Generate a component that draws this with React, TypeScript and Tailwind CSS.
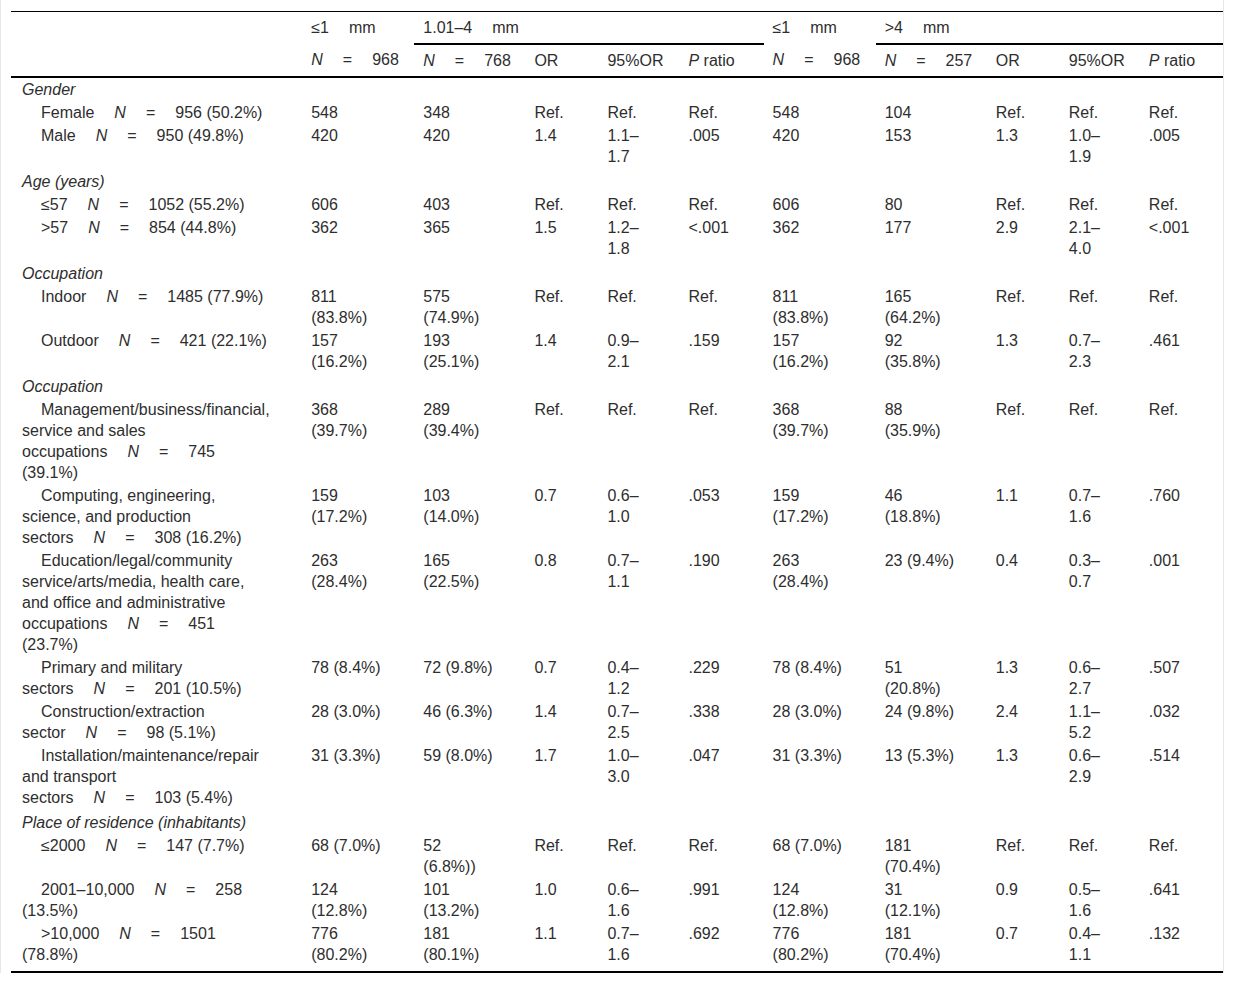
const font = { fontFamily: '"Liberation Sans", Arial, Helvetica, sans-serif' };

type Row =
  | { section: string }
  | { label: [string, string, string, string]; v: string[] };

const rows: Row[] = [
  { section: 'Gender' },
  { label: ['', 'Female', '956', '(50.2%)'], v: ['548', '348', 'Ref.', 'Ref.', 'Ref.', '548', '104', 'Ref.', 'Ref.', 'Ref.'] },
  { label: ['', 'Male', '950', '(49.8%)'], v: ['420', '420', '1.4', '1.1–1.7', '.005', '420', '153', '1.3', '1.0–1.9', '.005'] },
  { section: 'Age (years)' },
  { label: ['', '≤57', '1052', '(55.2%)'], v: ['606', '403', 'Ref.', 'Ref.', 'Ref.', '606', '80', 'Ref.', 'Ref.', 'Ref.'] },
  { label: ['', '>57', '854', '(44.8%)'], v: ['362', '365', '1.5', '1.2–1.8', '<.001', '362', '177', '2.9', '2.1–4.0', '<.001'] },
  { section: 'Occupation' },
  { label: ['', 'Indoor', '1485', '(77.9%)'], v: ['811 (83.8%)', '575 (74.9%)', 'Ref.', 'Ref.', 'Ref.', '811 (83.8%)', '165 (64.2%)', 'Ref.', 'Ref.', 'Ref.'] },
  { label: ['', 'Outdoor', '421', '(22.1%)'], v: ['157 (16.2%)', '193 (25.1%)', '1.4', '0.9–2.1', '.159', '157 (16.2%)', '92 (35.8%)', '1.3', '0.7–2.3', '.461'] },
  { section: 'Occupation' },
  {
    label: ['Management/business/financial, service and sales', 'occupations', '745', '(39.1%)'],
    v: ['368 (39.7%)', '289 (39.4%)', 'Ref.', 'Ref.', 'Ref.', '368 (39.7%)', '88 (35.9%)', 'Ref.', 'Ref.', 'Ref.'],
  },
  {
    label: ['Computing, engineering, science, and production', 'sectors', '308', '(16.2%)'],
    v: ['159 (17.2%)', '103 (14.0%)', '0.7', '0.6–1.0', '.053', '159 (17.2%)', '46 (18.8%)', '1.1', '0.7–1.6', '.760'],
  },
  {
    label: ['Education/legal/community service/arts/media, health care, and office and administrative', 'occupations', '451', '(23.7%)'],
    v: ['263 (28.4%)', '165 (22.5%)', '0.8', '0.7–1.1', '.190', '263 (28.4%)', '23 (9.4%)', '0.4', '0.3–0.7', '.001'],
  },
  {
    label: ['Primary and military', 'sectors', '201', '(10.5%)'],
    v: ['78 (8.4%)', '72 (9.8%)', '0.7', '0.4–1.2', '.229', '78 (8.4%)', '51 (20.8%)', '1.3', '0.6–2.7', '.507'],
  },
  {
    label: ['Construction/extraction', 'sector', '98', '(5.1%)'],
    v: ['28 (3.0%)', '46 (6.3%)', '1.4', '0.7–2.5', '.338', '28 (3.0%)', '24 (9.8%)', '2.4', '1.1–5.2', '.032'],
  },
  {
    label: ['Installation/maintenance/repair and transport', 'sectors', '103', '(5.4%)'],
    v: ['31 (3.3%)', '59 (8.0%)', '1.7', '1.0–3.0', '.047', '31 (3.3%)', '13 (5.3%)', '1.3', '0.6–2.9', '.514'],
  },
  { section: 'Place of residence (inhabitants)' },
  { label: ['', '≤2000', '147', '(7.7%)'], v: ['68 (7.0%)', '52 (6.8%))', 'Ref.', 'Ref.', 'Ref.', '68 (7.0%)', '181 (70.4%)', 'Ref.', 'Ref.', 'Ref.'] },
  { label: ['', '2001–10,000', '258', '(13.5%)'], v: ['124 (12.8%)', '101 (13.2%)', '1.0', '0.6–1.6', '.991', '124 (12.8%)', '31 (12.1%)', '0.9', '0.5–1.6', '.641'] },
  { label: ['', '>10,000', '1501', '(78.8%)'], v: ['776 (80.2%)', '181 (80.1%)', '1.1', '0.7–1.6', '.692', '776 (80.2%)', '181 (70.4%)', '0.7', '0.4–1.1', '.132'] },
];

// value column widths, left to right
const widths = ['w-[112px]', 'w-[111px]', 'w-[73px]', 'w-[81px]', 'w-[84px]', 'w-[112px]', 'w-[111px]', 'w-[73px]', 'w-[80px]', 'w-[83px]'];

const NEq = ({ n }: { n: string }) => (
  <span className="whitespace-nowrap">
    <i>N</i>
    <span className="ml-[20px]">=</span>
    <span className="ml-[20px]">{n}</span>
  </span>
);

const Label = ({ parts }: { parts: [string, string, string, string] }) => {
  const [pre, word, n, pct] = parts;
  return (
    <>
      {pre && pre + ' '}
      <span className="whitespace-nowrap">
        {word}
        <i className="mx-[20px]">N</i>=<span className="ml-[20px]">{n}</span>
      </span>{' '}
      {pct}
    </>
  );
};

const Mm = ({ v }: { v: string }) => (
  <span className="whitespace-nowrap">
    {v}
    <span className="ml-[20px]">mm</span>
  </span>
);

const th = 'pl-[9px] pr-[31px] py-[5px] text-left font-normal align-top whitespace-nowrap';

export default function App() {
  return (
    <div className="min-h-screen bg-white text-[#2e2e2e]" style={font}>
      <div className="w-[1224px] border-x border-[#e8e8e8] pl-[10px] pt-[11px]">
        <table className="w-[1212px] table-fixed border-collapse text-[16px] leading-[21px]">
          <colgroup>
            <col className="w-[291px]" />
            {widths.map((w, i) => (
              <col key={i} className={w} />
            ))}
          </colgroup>
          <thead>
            <tr className="border-t border-black">
              <th rowSpan={2} className={th} />
              <th className={th}>
                <Mm v="≤1" />
              </th>
              <th colSpan={4} className={`${th} border-b-2 border-black`}>
                <Mm v="1.01–4" />
              </th>
              <th className={th}>
                <Mm v="≤1" />
              </th>
              <th colSpan={4} className={`${th} border-b-2 border-black`}>
                <Mm v=">4" />
              </th>
            </tr>
            <tr className="border-b-2 border-black">
              <th className={th}>
                <NEq n="968" />
              </th>
              <th className={th}>
                <NEq n="768" />
              </th>
              <th className={th}>OR</th>
              <th className={th}>95%OR</th>
              <th className={th}>
                <i>P</i> ratio
              </th>
              <th className={th}>
                <NEq n="968" />
              </th>
              <th className={th}>
                <NEq n="257" />
              </th>
              <th className={th}>OR</th>
              <th className={th}>95%OR</th>
              <th className={th}>
                <i>P</i> ratio
              </th>
            </tr>
          </thead>
          <tbody className="border-b-2 border-black">
            {rows.map((r, i) => {
              const pad = i === rows.length - 1 ? 'pb-[6px]' : 'pb-[2px]';
              return 'section' in r ? (
                <tr key={i}>
                  <td colSpan={11} className={`pl-[11px] ${i === 0 ? 'pt-[1px]' : 'pt-[2px]'} ${pad} italic`}>
                    {r.section}
                  </td>
                </tr>
              ) : (
                <tr key={i}>
                  <td className={`pl-[11px] pr-[30px] pt-0 ${pad} align-top indent-[19px]`}>
                    <Label parts={r.label} />
                  </td>
                  {r.v.map((v, j) => (
                    <td key={j} className={`pl-[9px] pr-[31px] pt-0 ${pad} align-top`}>
                      {v}
                    </td>
                  ))}
                </tr>
              );
            })}
          </tbody>
        </table>
      </div>
    </div>
  );
}
